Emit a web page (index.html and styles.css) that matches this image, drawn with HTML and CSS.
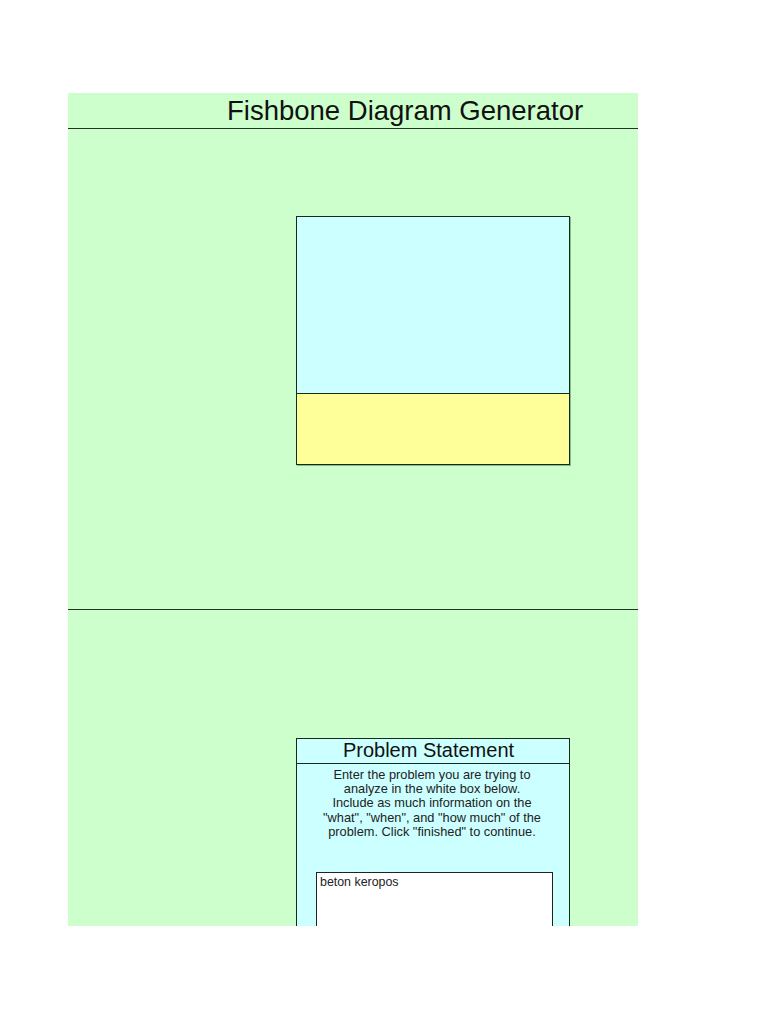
FILE: index.html
```html
<!DOCTYPE html>
<html>
<head>
<meta charset="utf-8">
<link rel="stylesheet" href="styles.css">
</head>
<body>
<div class="sheet">
  <div class="title-row">Fishbone Diagram Generator</div>
  <div class="section section-top">
    <div class="box">
      <div class="box-cyan"></div>
      <div class="box-yellow"></div>
    </div>
  </div>
  <div class="section section-bottom">
    <div class="card">
      <div class="card-head">Problem Statement</div>
      <div class="card-body">
        <p class="instructions">Enter the problem you are trying to<br>analyze in the white box below.<br>Include as much information on the<br>"what", "when", and "how much" of the<br>problem. Click "finished" to continue.</p>
        <div class="input-box">beton keropos</div>
      </div>
    </div>
  </div>
</div>
</body>
</html>
```
FILE: styles.css
```css
html, body {
  margin: 0;
  padding: 0;
  background: #ffffff;
}
body {
  font-family: "Liberation Sans", Arial, sans-serif;
  color: #1a1a1a;
}
.sheet {
  margin: 93px 0 0 68px;
  width: 570px;
  height: 833px;
  overflow: hidden;
  background: #ccffcc;
}
.title-row {
  height: 32px;
  line-height: 32px;
  padding: 2px 0 1px 159px;
  font-size: 27.5px;
  color: #111;
  border-bottom: 1px solid #223322;
  white-space: nowrap;
}
.section-top {
  height: 481px;
  border-bottom: 1px solid #223322;
  padding: 87px 0 0 228px;
  box-sizing: border-box;
}
.box {
  width: 274px;
  border: 1px solid #1a2a1a;
  box-sizing: border-box;
  box-shadow: 1px 1px 0 rgba(0,60,0,0.35);
}
.box-cyan {
  height: 176px;
  background: #ccffff;
  border-bottom: 1px solid #1a2a1a;
}
.box-yellow {
  height: 70px;
  background: #ffff99;
}
.section-bottom {
  padding: 128px 0 0 228px;
}
.card {
  width: 274px;
  border: 1px solid #1a2a1a;
  box-sizing: border-box;
  background: #ccffff;
  height: 400px;
}
.card-head {
  height: 22px;
  line-height: 22px;
  padding-bottom: 2px;
  font-size: 20px;
  text-align: center;
  padding-right: 9px;
  color: #111;
  border-bottom: 1px solid #1a2a1a;
}
.card-body {
  padding: 4px 16px 0 19px;
}
.instructions {
  margin: 0;
  font-size: 12.8px;
  line-height: 14.2px;
  text-align: center;
  color: #222;
  padding-right: 5px;
  white-space: nowrap;
}
.input-box {
  margin-top: 33px;
  width: 237px;
  height: 200px;
  box-sizing: border-box;
  background: #ffffff;
  border: 1px solid #222;
  font-size: 12.4px;
  line-height: 14px;
  padding: 2px 3px 0;
  color: #222;
}
```
